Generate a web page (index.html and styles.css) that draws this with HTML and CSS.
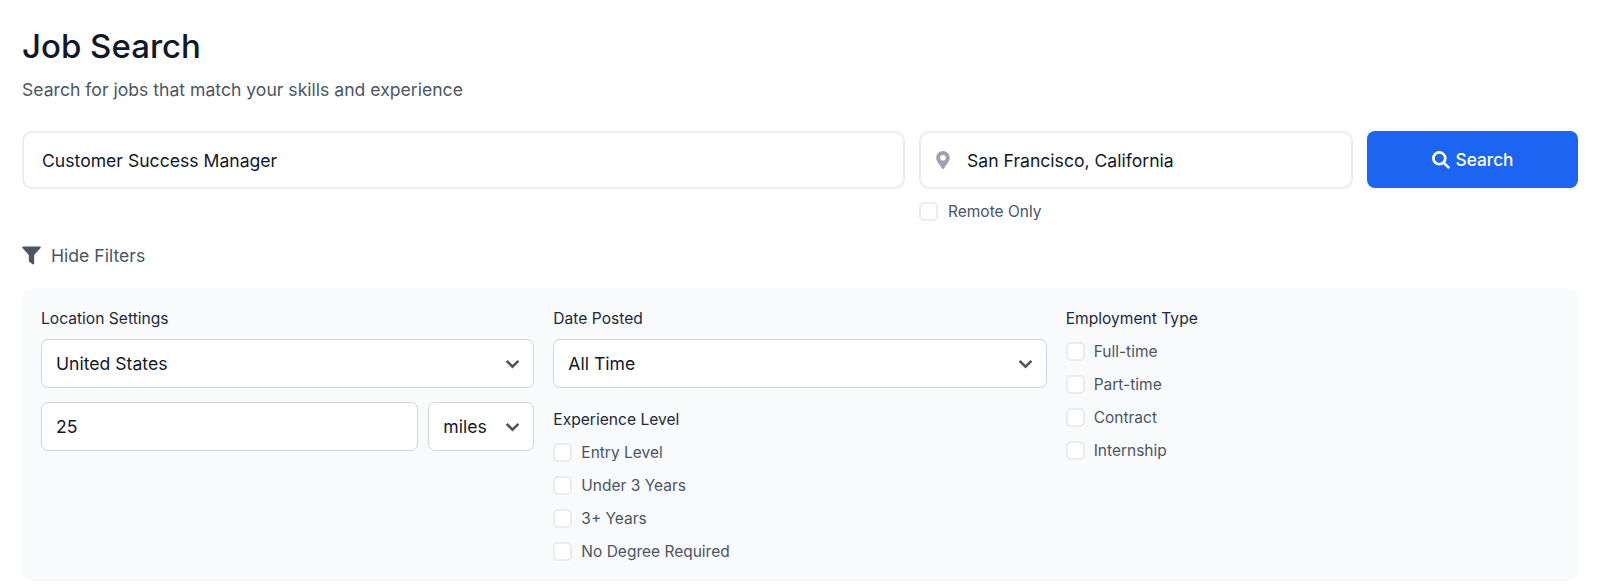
FILE: index.html
```html
<!DOCTYPE html>
<html lang="en">

<head>
  <meta charset="UTF-8">
  <title>Job Search</title>
  <link rel="stylesheet" href="styles.css">
</head>

<body>
  <div class="page">
    <h1>Job Search</h1>
    <p class="subtitle">Search for jobs that match your skills and experience</p>

    <!-- Search row -->
    <div class="search-row">
      <input class="field keyword" type="text" value="Customer Success Manager">
      <div class="location-col">
        <div class="location-box">
          <svg class="pin-icon" viewBox="0 0 384 512"><path d="M172 502C27 291 0 269 0 192 0 86 86 0 192 0s192 86 192 192c0 77-27 99-172 310-10 14-30 14-40 0zm20-230a80 80 0 1 0 0-160 80 80 0 0 0 0 160z"/></svg>
          <input class="field location" type="text" value="San Francisco, California">
        </div>
        <label class="check"><input type="checkbox"><span>Remote Only</span></label>
      </div>
      <button class="search-btn" type="button">
        <svg class="search-icon" viewBox="0 0 24 24"><circle cx="10.5" cy="10.5" r="7.5"/><path d="M16 16l6 6"/></svg>
        Search
      </button>
    </div>

    <div class="filter-toggle">
      <svg class="filter-icon" viewBox="0 0 20 20"><path d="M1.2 1h17.6c.9 0 1.3 1 .7 1.7L12.800 10v8.800c0 .9-1 1.400-1.700.9l-3.400-2.500c-.3-.2-.5-.5-.5-.9V10L.5 2.700C-.1 2 .3 1 1.200 1z"/></svg>
      <span>Hide Filters</span>
    </div>

    <!-- Filters panel -->
    <div class="filters">
      <div class="filter-col">
        <div class="filter-title">Location Settings</div>
        <div class="select-wrap">
          <select class="field select"><option>United States</option></select>
          <svg class="chevron" viewBox="0 0 14 9"><path d="M1.500 1.500L7 7l5.500-5.500"/></svg>
        </div>
        <div class="radius-row">
          <input class="field radius" type="text" value="25">
          <div class="select-wrap unit">
            <select class="field select"><option>miles</option></select>
            <svg class="chevron" viewBox="0 0 14 9"><path d="M1.500 1.500L7 7l5.500-5.500"/></svg>
          </div>
        </div>
      </div>

      <div class="filter-col">
        <div class="filter-title">Date Posted</div>
        <div class="select-wrap">
          <select class="field select"><option>All Time</option></select>
          <svg class="chevron" viewBox="0 0 14 9"><path d="M1.500 1.500L7 7l5.500-5.500"/></svg>
        </div>
        <div class="filter-title second">Experience Level</div>
        <div class="check-list">
          <label class="check"><input type="checkbox"><span>Entry Level</span></label>
          <label class="check"><input type="checkbox"><span>Under 3 Years</span></label>
          <label class="check"><input type="checkbox"><span>3+ Years</span></label>
          <label class="check"><input type="checkbox"><span>No Degree Required</span></label>
        </div>
      </div>

      <div class="filter-col">
        <div class="filter-title tight">Employment Type</div>
        <div class="check-list">
          <label class="check"><input type="checkbox"><span>Full-time</span></label>
          <label class="check"><input type="checkbox"><span>Part-time</span></label>
          <label class="check"><input type="checkbox"><span>Contract</span></label>
          <label class="check"><input type="checkbox"><span>Internship</span></label>
        </div>
      </div>
    </div>
  </div>
</body>

</html>
```

FILE: styles.css
```css
/* Common styles */
* {
  box-sizing: border-box;
}

body {
  margin: 0;
  background-color: #ffffff;
  font-family: Inter, "Noto Sans", sans-serif;
  color: #111827;
}

.page {
  padding: 28px 22px 0;
}

h1 {
  margin: 0;
  font-size: 33px;
  line-height: 36px;
  font-weight: 500;
  color: #111827;
}

.subtitle {
  margin: 14px 0 0;
  font-size: 17.6px;
  line-height: 24px;
  color: #4b5563;
}

/* Search row */
.search-row {
  display: flex;
  gap: 14px;
  margin-top: 29px;
}

.field {
  height: 49px;
  border: 1px solid #d1d5db;
  border-radius: 7px;
  background-color: #fff;
  font-family: inherit;
  font-size: 17.6px;
  color: #111827;
  outline: none;
}

.keyword {
  width: 883px;
  height: 58px;
  padding: 0 18px;
  border: 2px solid #ebecf0;
  border-radius: 10px;
}

.location-col {
  width: 434px;
}

.location-box {
  position: relative;
}

.location {
  width: 100%;
  height: 58px;
  padding: 0 18px 0 46px;
  border: 2px solid #ebecf0;
  border-radius: 10px;
}

.pin-icon {
  position: absolute;
  left: 17px;
  top: 20px;
  width: 14px;
  height: 18px;
  fill: #9ca3af;
}

.search-btn {
  display: flex;
  align-items: center;
  justify-content: center;
  gap: 5px;
  width: 211px;
  height: 57px;
  border: none;
  border-radius: 8px;
  background-color: #1b65f2;
  color: #fff;
  font-family: inherit;
  font-size: 17.3px;
  font-weight: 500;
}

.search-icon {
  width: 19px;
  height: 19px;
  fill: none;
  stroke: #fff;
  stroke-width: 3.4;
  stroke-linecap: round;
}

/* Checkboxes */
.check {
  display: flex;
  align-items: center;
  gap: 9px;
  height: 33px;
  font-size: 15.5px;
  color: #4b5563;
}

.check input {
  appearance: none;
  flex: none;
  width: 19px;
  height: 19px;
  margin: 0;
  border: 2px solid #ebecf0;
  border-radius: 5px;
  background-color: #fff;
}

.location-col .check {
  margin-top: 6px;
  height: 33px;
  gap: 10px;
}

/* Filter toggle */
.filter-toggle {
  display: flex;
  align-items: center;
  gap: 10px;
  margin-top: 15px;
  height: 24px;
  font-size: 17.6px;
  color: #4b5563;
}

.filter-icon {
  width: 19px;
  height: 20px;
  fill: #4b5563;
}

/* Filters panel */
.filters {
  display: grid;
  grid-template-columns: repeat(3, 1fr);
  gap: 19px;
  height: 293px;
  margin-top: 21px;
  padding: 18px 19px;
  border-radius: 10px;
  background-color: #f9fafb;
}

.filter-title {
  height: 25px;
  margin-bottom: 8px;
  font-size: 15.6px;
  line-height: 25px;
  font-weight: 400;
  color: #1f2937;
}

.filter-title.second {
  margin: 19px 0 0;
  height: 25px;
}

.filter-title.tight {
  margin-bottom: 0;
}

.check-list {
  padding-top: 4px;
}

.select-wrap {
  position: relative;
}

.select {
  appearance: none;
  width: 100%;
  padding: 0 40px 0 14px;
}

.chevron {
  position: absolute;
  right: 14px;
  top: 20px;
  width: 15px;
  height: 10px;
  fill: none;
  stroke: #4b5563;
  stroke-width: 2.400;
  pointer-events: none;
}

.radius-row {
  display: flex;
  gap: 10px;
  margin-top: 14px;
}

.radius {
  flex: 1;
  min-width: 0;
  padding: 0 14px;
}

.unit {
  width: 106px;
}
```
